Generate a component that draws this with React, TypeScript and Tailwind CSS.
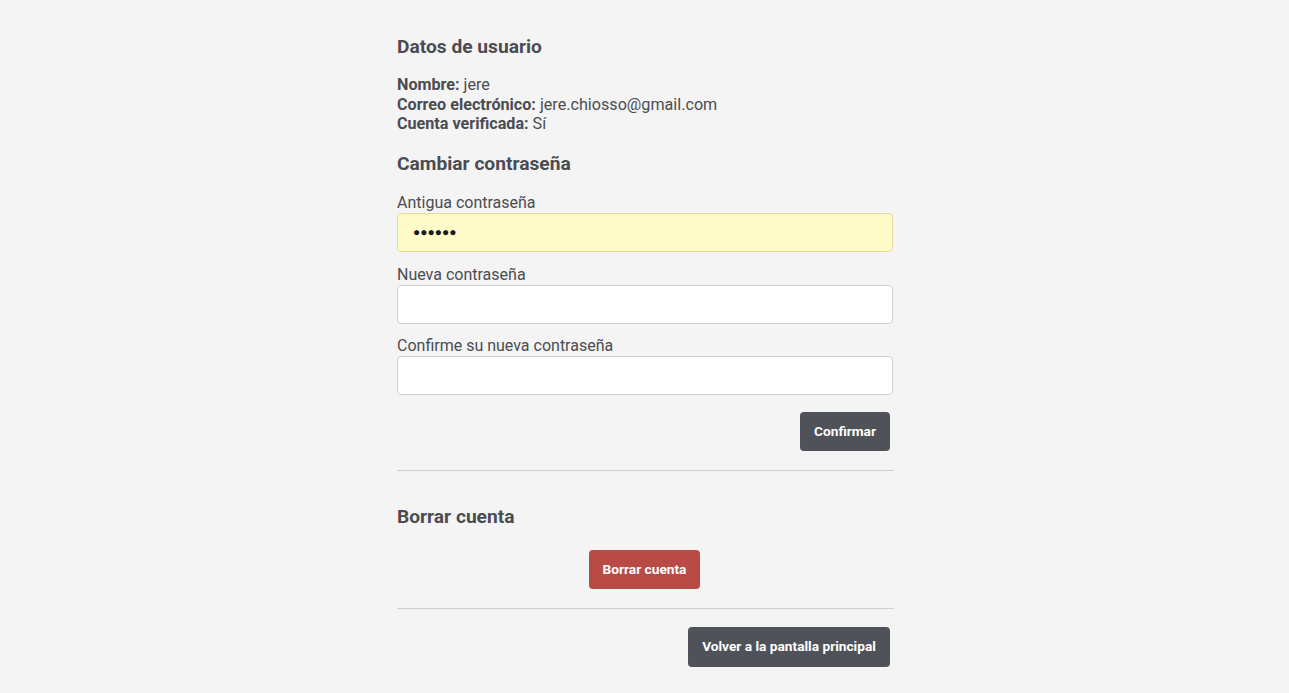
import React from "react";

export default function App() {
  const font = { fontFamily: "Roboto, 'Liberation Sans', sans-serif" };
  return (
    <div className="flex min-h-[693px] w-full justify-center bg-[#f4f4f4] pl-[2px] text-[#4a4c52]" style={font}>
      <div className="flex w-[497px] flex-col pt-[35px] pb-[26px]">
        <h2 className="text-[19.2px] font-bold leading-[24px]">Datos de usuario</h2>
        <div className="mt-[16px] text-[16.15px] leading-[19.5px]">
          <div><span className="font-bold">Nombre:</span> jere</div>
          <div><span className="font-bold">Correo electrónico:</span> jere.chiosso@gmail.com</div>
          <div><span className="font-bold">Cuenta verificada:</span> Sí</div>
        </div>
        <h2 className="mt-[18px] text-[19.2px] font-bold leading-[24px]">Cambiar contraseña</h2>
        <label className="mt-[17px] text-[16px] leading-[20px]">Antigua contraseña</label>
        <div className="mr-px flex h-[39px] items-center rounded-[4px] border border-[#eed99a] bg-[#fffbc8] px-[15px]">
          <span className="text-[12px] tracking-[0px] text-[#1a1a1a]">●●●●●●</span>
        </div>
        <label className="mt-[13px] text-[16px] leading-[20px]">Nueva contraseña</label>
        <div className="mr-px h-[39px] rounded-[4px] border border-[#cfcfcf] bg-white" />
        <label className="mt-[12px] text-[16px] leading-[20px]">Confirme su nueva contraseña</label>
        <div className="mr-px h-[39px] rounded-[4px] border border-[#cfcfcf] bg-white" />
        <div className="mt-[17px] flex justify-end pr-[4px]">
          <button className="h-[39px] w-[90px] rounded-[4px] bg-[#4f5259] text-[13.7px] font-bold text-white">Confirmar</button>
        </div>
        <div className="mt-[19px] h-px bg-[#d0d0d0]" />
        <h2 className="mt-[34px] text-[19.2px] font-bold leading-[24px]">Borrar cuenta</h2>
        <div className="mt-[21px] flex justify-center pr-[2px]">
          <button className="h-[39px] w-[111px] rounded-[4px] bg-[#b84b46] text-[13.7px] font-bold text-white">Borrar cuenta</button>
        </div>
        <div className="mt-[19px] h-px bg-[#d0d0d0]" />
        <div className="mt-[18px] flex justify-end pr-[4px]">
          <button className="h-[40px] w-[202px] rounded-[4px] bg-[#4f5259] text-[13.7px] font-bold text-white">Volver a la pantalla principal</button>
        </div>
      </div>
    </div>
  );
}
